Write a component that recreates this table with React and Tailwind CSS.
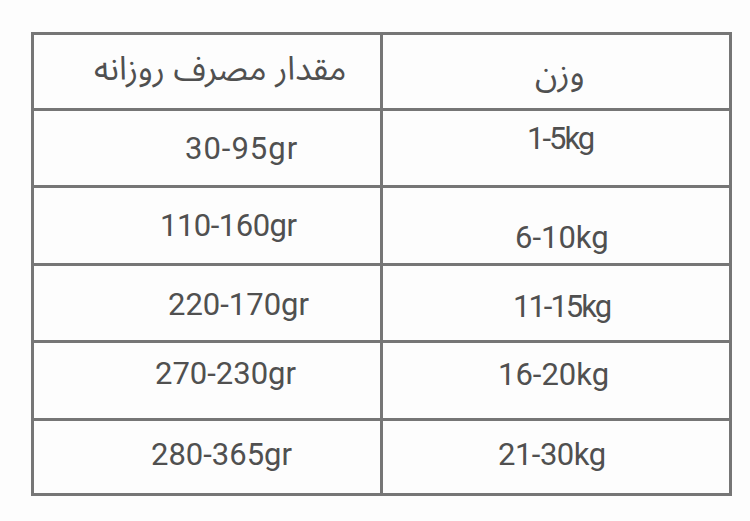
import React from "react";

function Cell({ left, cls, children }) {
  return (
    <div
      className={
        left
          ? "w-[349px] border-r-[3px] border-[#767676] flex items-center h-full " + cls
          : "flex-1 flex items-center h-full " + cls
      }
    >
      <span className="leading-none whitespace-nowrap">{children}</span>
    </div>
  );
}

export default function App() {
  return (
    <div className="w-[750px] h-[521px] bg-[#fdfdfd] pt-[32px] pl-[31px] text-[#505050] font-['Roboto','Liberation_Sans',sans-serif]">
      <div className="w-[701px] border-[3px] border-[#767676] flex flex-col">
        <div className="h-[76px] border-b-[3px] border-[#767676] flex font-['Noto_Sans_Arabic','DejaVu_Sans','Noto_Sans',sans-serif] text-[33px]">
          <Cell left cls="pl-[60px] pb-[5px]">
            <span dir="rtl">مقدار مصرف روزانه</span>
          </Cell>
          <Cell cls="pl-[152px] pt-[5px]">
            <span dir="rtl">وزن</span>
          </Cell>
        </div>
        <div className="h-[77px] border-b-[3px] border-[#767676] flex text-[31px]">
          <Cell left cls="pl-[151px] tracking-[1px]">30-95gr</Cell>
          <Cell cls="pl-[144px] pb-[19px] tracking-[-2px]">1-5kg</Cell>
        </div>
        <div className="h-[78px] border-b-[3px] border-[#767676] flex text-[31px]">
          <Cell left cls="pl-[126px] tracking-[-0.5px]">110-160gr</Cell>
          <Cell cls="pl-[132px] pt-[24px]">6-10kg</Cell>
        </div>
        <div className="h-[77px] border-b-[3px] border-[#767676] flex text-[31px]">
          <Cell left cls="pl-[134px] pt-[3px]">220-170gr</Cell>
          <Cell cls="pl-[130px] pt-[6px] tracking-[-2px]">11-15kg</Cell>
        </div>
        <div className="h-[78px] border-b-[3px] border-[#767676] flex text-[31px]">
          <Cell left cls="pl-[121px] pb-[15px]">270-230gr</Cell>
          <Cell cls="pl-[115px] pb-[13px]">16-20kg</Cell>
        </div>
        <div className="h-[72px] flex text-[31px]">
          <Cell left cls="pl-[117px] pb-[6px]">280-365gr</Cell>
          <Cell cls="pl-[115px] pb-[5px] tracking-[-0.5px]">21-30kg</Cell>
        </div>
      </div>
    </div>
  );
}
